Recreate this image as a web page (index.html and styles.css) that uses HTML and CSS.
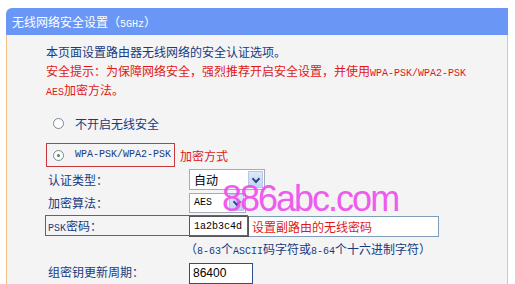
FILE: index.html
```html
<!DOCTYPE html>
<html lang="zh-CN">
<head>
    <meta charset="UTF-8">
    <title>无线网络安全设置</title>
    <link rel="stylesheet" href="styles.css">
</head>
<body>
    <div class="page">
        <div class="head">无线网络安全设置（<span class="en">5GHz</span>）</div>

        <div class="panel">
            <p class="intro">本页面设置路由器无线网络的安全认证选项。</p>
            <p class="warn">安全提示：为保障网络安全，强烈推荐开启安全设置，并使用<span class="en">WPA-PSK/WPA2-PSK</span><br><span class="en">AES</span>加密方法。</p>

            <!-- security options -->
            <div class="opt"><span class="radio"></span>不开启无线安全</div>
            <div class="opt-mark">
                <span class="mark-box"><span class="radio on"></span><span class="en">WPA-PSK/WPA2-PSK</span></span>
                <span class="note">加密方式</span>
            </div>

            <div class="row">
                <span class="label">认证类型：</span>
                <span class="select auth">自动<span class="arrow"></span></span>
            </div>
            <div class="row">
                <span class="label">加密算法：</span>
                <span class="select algo"><span class="en">AES</span><span class="arrow"></span></span>
            </div>
            <div class="row psk">
                <span class="label"><span class="en">PSK</span>密码：</span>
                <span class="long-input">
                    <span class="pwd">1a2b3c4d</span>
                    <span class="note">设置副路由的无线密码</span>
                </span>
                <span class="psk-mark"></span>
            </div>
            <div class="row hint">
                <span class="label"></span>
                <span class="hint-text">（<span class="en">8-63</span>个<span class="en">ASCII</span>码字符或<span class="en">8-64</span>个十六进制字符）</span>
            </div>
            <div class="row">
                <span class="label">组密钥更新周期：</span>
                <span class="input">86400</span>
            </div>
        </div>

        <div class="watermark">886abc.com</div>
    </div>
</body>
</html>
```

FILE: styles.css
```css
/* General Styling */
body {
    margin: 0;
    background-color: #fff;
    font-family: "Noto Sans CJK SC", sans-serif;
    font-size: 12px;
    color: #173a80;
}

.page {
    position: relative;
    width: 502px;
    height: 284px;
    margin-left: 6px;
    padding-top: 8px;
    overflow: hidden;
}

.en {
    font-family: "Liberation Mono", monospace;
    font-size: 10px;
    line-height: 10px;
}

.head {
    height: 27px;
    line-height: 27px;
    padding-left: 6px;
    background-color: #6a96f6;
    color: #fff;
    border-top-left-radius: 6px;
}

.panel {
    height: 260px;
    padding: 8px 0 0 39px;
    background-color: #f4f4f4;
    border-left: 1px solid #f3c185;
    border-right: 1px solid #f3c185;
}

p {
    margin: 0;
    height: 18px;
    line-height: 18px;
}

.warn {
    height: 37px;
    padding-top: 1px;
    line-height: 18.5px;
    color: #e01818;
}

/* Options */
.radio {
    display: inline-block;
    box-sizing: border-box;
    width: 11px;
    height: 11px;
    margin-right: 11px;
    border: 1px solid #7a8696;
    border-radius: 50%;
    background-color: #fff;
    position: relative;
}

.radio.on::after {
    content: "";
    position: absolute;
    left: 3px;
    top: 3px;
    width: 3px;
    height: 3px;
    border-radius: 50%;
    background-color: #3a9a3a;
}

.opt {
    display: flex;
    align-items: center;
    height: 20px;
    margin-top: 14px;
    padding-left: 7px;
}

.opt-mark {
    display: flex;
    align-items: center;
    margin-top: 10px;
    height: 24px;
}

.mark-box {
    display: flex;
    align-items: center;
    box-sizing: border-box;
    height: 24px;
    width: 129px;
    padding-left: 6px;
    border: 1px solid #c8383c;
}

.note {
    color: #e01818;
    margin-left: 5px;
}

/* Form rows */
.row {
    position: relative;
    display: flex;
    align-items: center;
    height: 23px;
}

.opt-mark + .row {
    margin-top: 1px;
}

.label {
    width: 141px;
    flex-shrink: 0;
    padding-left: 2px;
}

.select {
    display: flex;
    align-items: center;
    justify-content: space-between;
    box-sizing: border-box;
    height: 21px;
    padding-left: 4px;
    background-color: #fff;
    border: 1px solid #a5acb5;
    color: #000;
}

.select.auth {
    width: 76px;
}

.select.algo {
    width: 57px;
    height: 20px;
}

.arrow {
    width: 15px;
    height: 17px;
    margin-right: 1px;
    box-sizing: border-box;
    border: 1px solid #b3c6ec;
    background: linear-gradient(#dfe8fb, #c2d3f4);
    position: relative;
}

.arrow::after {
    content: "";
    position: absolute;
    left: 4px;
    top: 4px;
    width: 4px;
    height: 4px;
    border-right: 2px solid #2c4a8a;
    border-bottom: 2px solid #2c4a8a;
    transform: rotate(45deg);
}

.long-input {
    display: flex;
    align-items: center;
    box-sizing: border-box;
    width: 250px;
    height: 21px;
    margin-top: 2px;
    background-color: #fff;
    border: 1px solid #7f9db9;
}

.pwd {
    box-sizing: border-box;
    height: 21px;
    width: 60px;
    margin: -1px 0 0 -1px;
    line-height: 19px;
    padding-left: 4px;
    border: 1px solid #55575a;
    font-family: "Liberation Mono", monospace;
    font-size: 10px;
    color: #000;
}

.long-input .note {
    margin-left: 3px;
}

.psk-mark {
    position: absolute;
    left: 0;
    top: 1px;
    width: 203px;
    height: 21px;
    border: 1px solid #c8383c;
    box-sizing: border-box;
    margin-left: -1px;
}

.input {
    box-sizing: border-box;
    width: 64px;
    height: 21px;
    line-height: 19px;
    padding-left: 3px;
    margin-top: 3px;
    background-color: #fff;
    border: 1px solid #2a4f8f;
    font-family: "Liberation Sans", sans-serif;
    color: #000;
}

.hint {
    padding-left: 2px;
}

.hint-text {
    margin-left: -6px;
}

.watermark {
    position: absolute;
    left: 216px;
    top: 178px;
    font-family: "Liberation Sans", sans-serif;
    font-size: 36px;
    letter-spacing: -2px;
    color: #ee4cee;
    opacity: 0.9;
}
```
